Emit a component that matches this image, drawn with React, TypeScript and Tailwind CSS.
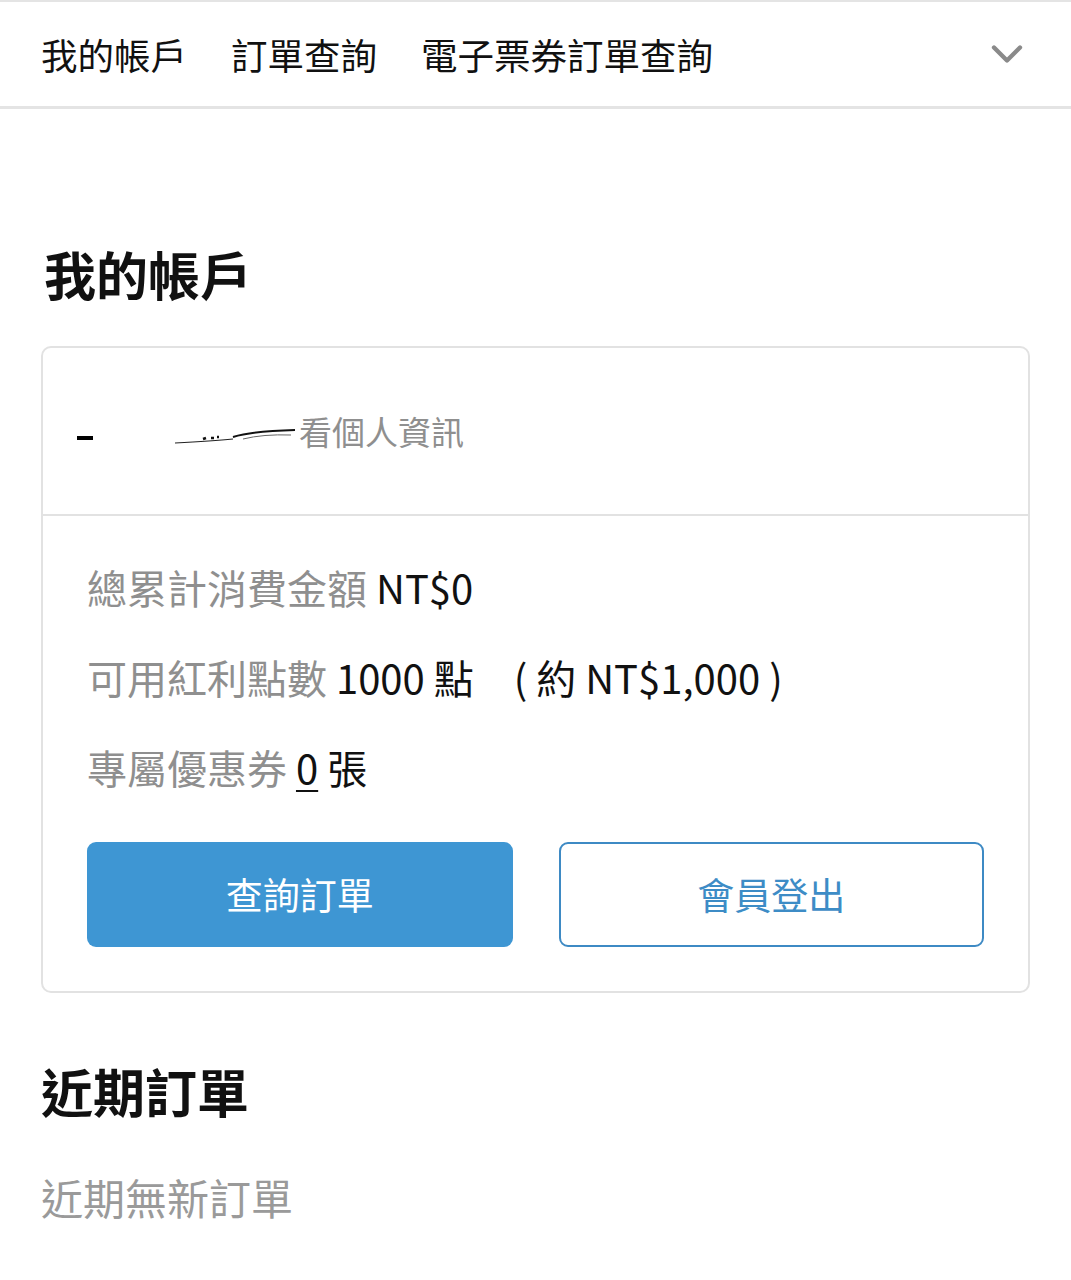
import { ChevronDown } from "lucide-react";

const font = { fontFamily: '"Noto Sans CJK TC", "Noto Sans", sans-serif' };

function Row({ label, children }: { label: string; children: React.ReactNode }) {
  return (
    <p className="text-[40px] leading-[40px] text-[#111]">
      <span className="text-[#8f8f8f]">{label}</span> {children}
    </p>
  );
}

export default function App() {
  return (
    <div className="min-h-[1280px] bg-white" style={font}>
      <nav className="flex h-[109px] items-center border-t-2 border-b-[3px] border-[#e4e4e4] pl-[41px] pr-[38px]">
        <div className="flex flex-1 gap-[44px] text-[36.5px] leading-[37px] text-[#111]">
          <span>我的帳戶</span>
          <span>訂單查詢</span>
          <span>電子票券訂單查詢</span>
        </div>
        <ChevronDown className="h-[52px] w-[52px] text-[#8a8a8a]" strokeWidth={2} />
      </nav>

      <main className="px-[41px]">
        <h1 className="mt-[140px] pl-[3px] text-[52px] font-bold leading-[50px] text-[#111]">我的帳戶</h1>

        <section className="mt-[47px] rounded-[10px] border-2 border-[#e2e2e2]">
          <div className="flex h-[166px] items-center pl-[34px]">
            <span className="mt-[14px] block h-[4px] w-[16px] bg-black" />
            <svg width="130" height="20" viewBox="0 0 130 20" className="ml-[80px] mt-[12px]">
              <path d="M2 16 Q40 14 60 12" stroke="#222" strokeWidth="1.2" fill="none" />
              <path d="M30 12 l3 -1 M38 11 l3 0 M44 10 l2 0" stroke="#111" strokeWidth="2.5" fill="none" />
              <path d="M60 10 Q80 4 122 3" stroke="#111" strokeWidth="2" fill="none" />
              <path d="M70 12 Q90 7 118 8" stroke="#666" strokeWidth="1" fill="none" />
            </svg>
            <span className="-ml-[4px] text-[33px] leading-[33px] text-[#8f8f8f]">看個人資訊</span>
          </div>
          <div className="border-t-2 border-[#e2e2e2] px-[44px] pt-[51px] pb-[44px]">
            <div className="flex flex-col gap-[50px]">
              <Row label="總累計消費金額">NT$0</Row>
              <Row label="可用紅利點數">
                1000 點<span className="ml-[40px]">( 約 NT$1,000 )</span>
              </Row>
              <Row label="專屬優惠券">
                <span className="underline decoration-2 underline-offset-[6px]">0</span> 張
              </Row>
            </div>
            <div className="mt-[55px] grid grid-cols-2 gap-[46px]">
              <button className="h-[105px] rounded-[9px] bg-[#3e96d3] text-[37px] text-white">查詢訂單</button>
              <button className="h-[105px] rounded-[9px] border-2 border-[#3e8ac4] bg-white text-[37px] text-[#3d8cc6]">會員登出</button>
            </div>
          </div>
        </section>

        <h2 className="mt-[73px] text-[52px] font-bold leading-[50px] text-[#111]">近期訂單</h2>
        <p className="mt-[60px] text-[42px] leading-[42px] text-[#9a9a9a]">近期無新訂單</p>
      </main>
    </div>
  );
}
